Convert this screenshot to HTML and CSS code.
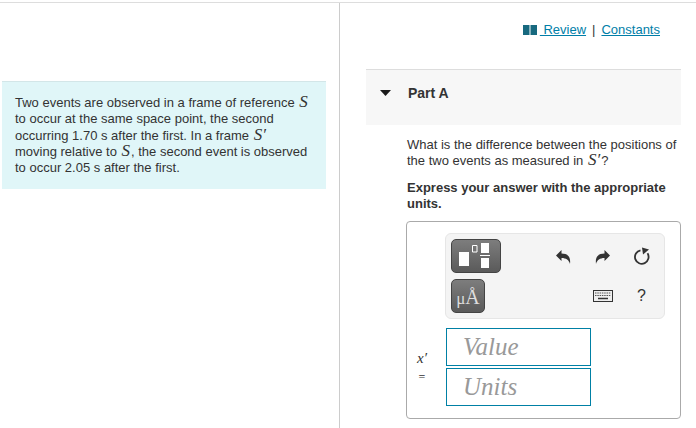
FILE: index.html
```html
<!DOCTYPE html>
<html lang="en">
  <head>
    <meta charset="UTF-8" />
    <meta name="viewport" content="width=device-width, initial-scale=1.0" />
    <link rel="stylesheet" href="styles.css">
    <title>Part A</title>
  </head>
  <body class="page">
    <aside class="intro">
      <div class="intro__box">
        <p class="intro__text">Two events are observed in a frame of reference <i class="math">S</i> to occur at the same space point, the second occurring 1.70 s after the first. In a frame <i class="math">S′</i> moving relative to <i class="math">S</i>, the second event is observed to occur 2.05 s after the first.</p>
      </div>
    </aside>
    <main class="main">
      <nav class="links">
        <svg class="links__book" width="14" height="10" viewBox="0 0 14 10">
          <path d="M0 0h6.500v10H0zM7.500 0H14v10H7.500z" fill="#17697f" />
        </svg>
        <a href="#" class="links__item">&nbsp;Review</a>
        <span class="links__sep">|</span>
        <a href="#" class="links__item">Constants</a>
      </nav>
      <section class="part">
        <svg class="part__arrow" width="11" height="6" viewBox="0 0 11 6">
          <path d="M0 0h11L5.500 6z" fill="#1a1a1a" />
        </svg>
        <h2 class="part__title">Part A</h2>
      </section>
      <div class="question">
        <p class="question__text">What is the difference between the positions of the two events as measured in <i class="math">S′</i>?</p>
        <p class="question__hint">Express your answer with the appropriate units.</p>
      </div>
      <div class="answer">
        <div class="toolbar">
          <div class="toolbar__left">
            <button type="button" class="tool tool--wide">
              <svg width="36" height="30" viewBox="0 0 36 30">
                <path d="M1 11h10v14H1zM23 2h8v10h-8zM23 17h8v10h-8z" fill="#fff" />
                <path d="M22 14.500h10" stroke="#fff" />
                <path d="M14.500 4.500h4.500v6.500h-4.500z" fill="none" stroke="#fff" />
              </svg>
            </button>
            <button type="button" class="tool tool--unit"><span class="tool__micro">μ</span>Å</button>
          </div>
          <div class="toolbar__right">
            <svg class="icon" width="15" height="15" viewBox="0 0 15 15">
              <path d="M0 6.500 5.500 1v3.500c5.500 0 9.500 2.500 8.500 10.500-1-4-4-6-8.500-6v3z" fill="#333" />
            </svg>
            <svg class="icon" width="15" height="15" viewBox="0 0 15 15">
              <path d="M15 6.500 9.500 1v3.500C4 4.500 0 7 1 15c1-4 4-6 8.500-6v3z" fill="#333" />
            </svg>
            <svg class="icon" width="18" height="18" viewBox="0 0 18 18">
              <path d="M7.500 3.300a6.800 6.800 0 1 0 7 3" fill="none" stroke="#333" stroke-width="1.800" />
              <path d="M9 .5 16 2.500 10 7.500z" fill="#333" />
            </svg>
            <svg class="icon icon--keyboard" width="20" height="12" viewBox="0 0 20 12">
              <rect x=".5" y=".5" width="19" height="11" fill="#eee" stroke="#333" />
              <path d="M2 3h16M2 5.500h16" stroke="#555" stroke-dasharray="1.500 .8" />
              <path d="M5 8.500h10" stroke="#333" stroke-width="1.500" />
            </svg>
            <span class="icon icon--help">?</span>
          </div>
        </div>
        <div class="entry">
          <div class="entry__label"><i class="entry__var">x′</i><span>=</span></div>
          <div class="entry__fields">
            <div class="field">Value</div>
            <div class="field">Units</div>
          </div>
        </div>
      </div>
    </main>
  </body>
</html>
```

FILE: styles.css
```css
html, body {
  height: 100%;
}
.page {
  margin: 0;
  padding-top: 2px;
  box-sizing: border-box;
  display: grid;
  grid-template-columns: 340px 1fr;
  grid-template-rows: 1px 1fr;
  font-family: "Liberation Sans", Arial, sans-serif;
  font-size: 13px;
  line-height: 16px;
  color: #333;
  overflow: hidden;
}
.page::before {
  content: "";
  grid-column: 1 / -1;
  height: 1px;
  background: #ddd;
}
.math {
  font-family: "Liberation Serif", serif;
  font-size: 17px;
  line-height: 14px;
  margin: 0 1px;
}
.intro {
  border-right: 1px solid #ccc;
  padding: 78px 13px 0 2px;
}
.intro__box {
  background: #e0f6f8;
  border-top: 1px solid #d3e6e8;
  padding: 13px 16px 13px 13px;
  height: 108px;
  box-sizing: border-box;
}
.intro__text {
  margin: 0;
  line-height: 16.300px;
}
.main {
  padding: 0 15px 0 26px;
}
.links {
  height: 66px;
  padding: 19px 21px 0 0;
  box-sizing: border-box;
  display: flex;
  justify-content: flex-end;
  align-items: flex-start;
  gap: 6px;
}
.links__book {
  margin: 3px -3px 0 0;
}
.links__item {
  color: #007ea8;
  text-decoration: underline;
}
.part {
  height: 56px;
  background: #f7f7f7;
  border-top: 1px solid #ddd;
  box-sizing: border-box;
  display: flex;
  align-items: flex-start;
  gap: 17px;
  padding: 15px 0 0 14px;
}
.part__arrow {
  margin-top: 5px;
}
.part__title {
  margin: 0;
  font-size: 14px;
  line-height: 16px;
  font-weight: bold;
}
.question {
  padding: 12px 0 0 41px;
}
.question__text {
  margin: 0 0 11px;
}
.question__hint {
  margin: 0 0 9px;
  font-weight: bold;
}
.answer {
  margin: 0 0 0 40px;
  height: 198px;
  box-sizing: border-box;
  border: 1px solid #aaa;
  border-radius: 4px;
  padding: 11px 15px 0 38px;
}
.toolbar {
  height: 86px;
  background: #f4f4f4;
  border: 1px solid #e6e6e6;
  border-radius: 6px;
  box-sizing: border-box;
  padding: 5px;
  display: flex;
  justify-content: space-between;
}
.toolbar__left {
  display: flex;
  flex-direction: column;
  align-items: flex-start;
  gap: 6px;
}
.tool {
  height: 34px;
  padding: 0;
  border: 1px solid #444;
  border-radius: 5px;
  background: linear-gradient(#7d7d7d, #5a5a5a);
  display: flex;
  align-items: center;
  justify-content: center;
}
.tool--wide {
  width: 50px;
}
.tool--unit {
  width: 34px;
  padding-top: 3px;
  align-items: baseline;
  line-height: 28px;
  color: #ddd;
  font-family: "Liberation Serif", serif;
  font-size: 20px;
}
.tool__micro {
  font-size: 17px;
}
.toolbar__right {
  display: grid;
  grid-template-columns: repeat(3, 39px);
  grid-template-rows: 34px 34px;
  row-gap: 6px;
  align-items: center;
  justify-items: center;
  margin-right: -2px;
}
.icon--keyboard {
  grid-column: 2;
}
.icon--help {
  grid-column: 3;
  font-size: 16px;
}
.entry {
  display: flex;
  margin-top: 9px;
}
.entry__label {
  width: 39px;
  margin-left: -38px;
  padding: 21px 9px 0 0;
  box-sizing: border-box;
  display: flex;
  flex-direction: column;
  align-items: center;
  gap: 1px;
  line-height: 18px;
  font-family: "Liberation Serif", serif;
  font-size: 12px;
}
.entry__var {
  font-size: 15px;
}
.entry__fields {
  display: flex;
  flex-direction: column;
  gap: 2px;
}
.field {
  width: 145px;
  height: 38px;
  box-sizing: border-box;
  border: 1px solid #0080a5;
  padding-left: 16px;
  font-family: "Liberation Serif", serif;
  font-style: italic;
  font-size: 25px;
  line-height: 36px;
  color: #999;
}
```
